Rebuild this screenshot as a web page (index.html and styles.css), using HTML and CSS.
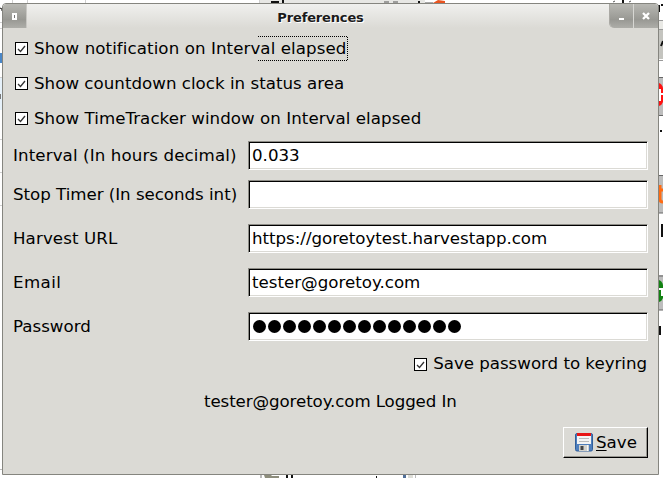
FILE: index.html
```html
<!DOCTYPE html>
<html lang="en">
<head>
<meta charset="utf-8">
<title>Preferences</title>
<link rel="stylesheet" href="styles.css">
</head>
<body>
<svg class="desktop" width="663" height="478" viewBox="0 0 663 478" aria-hidden="true">
  <rect width="663" height="478" fill="#fff"/>
  <path d="M12.500 0v4M27.500 0v4M85.500 0v4M259.500 0v4M0 22.500h3M0 28.500h3M0 77.500h3M0 139.500h3M0 172.500h3M0 205.500h3" stroke="#d0d0d0"/>
  <path d="M0 8l2 1v2" stroke="#111" fill="none"/>
  <path d="M0 53h3v10H0z" fill="#4a87c8"/>
  <path d="M0 78h3v32H0z" fill="#e6f1fa"/>
  <path d="M0 94h1v5H0z" fill="#777"/>
  <path d="M0 469.500h3" stroke="#bbb"/>
  <path d="M260 0h165v3H260z" fill="#e7e7e4"/>
  <path d="M271 1h8v2h-8zM282 0h2v3h-2zM418 1h2v3h-2zM622 0h2v3h-2z" fill="#111"/>
  <path d="M384 2h5M393 2h5M613 2l2-1M629 2l2-1" stroke="#555"/>
  <path d="M433 3l5-3 7 1v2z" fill="#e95420"/>
  <path d="M425 2.500h8" stroke="#aaa"/>
  <path d="M659 20h4v10h-4z" fill="#e9e9e5"/><path d="M659 30h4v29h-4z" fill="#c4c4bf"/>
  <path d="M659 20.500h4M659 29.500h4M659 60.500h4" stroke="#999"/>
  <path d="M659 5v7M661 5h2M661 46l2-5M660 131h2" stroke="#111" stroke-width="2" fill="none"/>
  <g id="badges">
    <path d="M659 77h4v38h-4zM659 175h4v38h-4zM659 275h4v35h-4z" fill="#bdbdbd"/>
    <path d="M659 77.500h4M659 115.500h4M659 175.500h4M659 213h4M659 276h4M659 310h4" stroke="#666"/>
    <path d="M659 83q3 1 4 5v14q-1 3-4 4z" fill="#f11"/>
    <path d="M660 89v12M660 94h3" stroke="#fff" stroke-width="2"/>
    <path d="M660 185v14q0 3 3 3M659 190h4" stroke="#ff6c13" stroke-width="3" fill="none"/>
    <path d="M659 280q3 1 4 5v13q-1 3-4 4z" fill="#128212"/>
    <path d="M659 289h4M662 288v8" stroke="#fff" stroke-width="2"/>
  </g>
  <path d="M661 224h2v13h-2zM659 326h2v9h-2z" fill="#111"/>
  <path d="M260 475h2v3h-2zM415 475h1v3h-1z" fill="#bbb"/>
  <path d="M264 475h7l1 1h7v2h-14z" fill="#8d8d7c"/>
  <path d="M286 475h2v3h-2zM291 475h2v3h-2zM376 476h1v2h-1z" fill="#111"/>
  <path d="M403 475h3v3h-3z" fill="#527099"/><path d="M408 475h5v3h-5z" fill="#deded8"/>
</svg>

<main class="window">
  <header class="titlebar">
    <span class="control menu"><svg width="24" height="24"><path d="M9 9h5v7H9z" fill="#fff"/><path d="M11 11h1v3h-1z" fill="#777"/></svg></span>
    <h1 class="title">Preferences</h1>
    <span class="controls">
      <span class="control minimize"><svg width="24" height="24"><path d="M9 14h5v2H9z" fill="#fff"/></svg></span>
      <span class="control close"><svg width="24" height="24"><path d="M9 9l6 6M15 9l-6 6" stroke="#fff" stroke-width="2.300"/></svg></span>
    </span>
  </header>

  <section class="checks">
    <div class="check"><svg class="box" width="13" height="13"><rect x=".5" y=".5" width="12" height="12"/><path d="M3 7l2.500 2.500L10 4"/></svg><span class="notify">Show notification on Interval elapsed</span></div>
    <div class="check"><svg class="box" width="13" height="13"><rect x=".5" y=".5" width="12" height="12"/><path d="M3 7l2.500 2.500L10 4"/></svg><span class="countdown">Show countdown clock in status area</span></div>
    <div class="check"><svg class="box" width="13" height="13"><rect x=".5" y=".5" width="12" height="12"/><path d="M3 7l2.500 2.500L10 4"/></svg><span class="tracker">Show TimeTracker window on Interval elapsed</span></div>
    <svg class="focus" width="92" height="26"><path d="M1 .5H91M90.500 1V25M1 24.500H91"/></svg>
  </section>

  <section class="fields">
    <span class="label interval">Interval (In hours decimal)</span><div class="entry">0.033</div>
    <span class="label stop">Stop Timer (In seconds int)</span><div class="entry"></div>
    <span class="label harvest">Harvest URL</span><div class="entry url">https://goretoytest.harvestapp.com</div>
    <span class="label email">Email</span><div class="entry">tester@goretoy.com</div>
    <span class="label">Password</span><div class="entry password"><i></i><i></i><i></i><i></i><i></i><i></i><i></i><i></i><i></i><i></i><i></i><i></i><i></i><i></i></div>
  </section>

  <div class="check keyring"><svg class="box" width="13" height="13"><rect x=".5" y=".5" width="12" height="12"/><path d="M3 7l2.500 2.500L10 4"/></svg><span>Save password to keyring</span></div>
  <p class="status">tester@goretoy.com Logged In</p>
  <div class="save">
    <svg width="18" height="19" viewBox="0 0 18 19"><rect x=".5" y=".5" width="17" height="17.500" rx="1.500" fill="#4f7fbd" stroke="#315f9b"/><path d="M2 1h14v10H2z" fill="#f4f4f4"/><path d="M2 0h14v3H2z" fill="#e81414"/><path d="M4 5.500h10M4 8.500h10" stroke="#bbb"/><path d="M4 12h10v6H4z" fill="#d2d2cd"/><path d="M5.500 13h3v4h-3z" fill="#444"/><path d="M12 12h1v6h-1z" fill="#f7f7f7"/></svg>
    <span><u>S</u>ave</span>
  </div>
</main>
</body>
</html>
```
FILE: styles.css
```css
* { box-sizing: border-box; }
body {
  margin: 0;
  width: 663px;
  height: 478px;
  overflow: hidden;
  padding: 3px 0 0 2px;
  font: 16.670px/20px "DejaVu Sans", sans-serif;
  color: #000;
}
svg { display: block; flex: none; }
.desktop { position: absolute; left: 0; top: 0; }
.window {
  position: relative;
  width: 657px;
  height: 472px;
  background: #dbdad5;
  border: 1px solid #85857f;
  border-radius: 4px 4px 0 0;
  overflow: hidden;
  white-space: nowrap;
}
.titlebar {
  display: flex;
  justify-content: space-between;
  height: 24px;
  background: linear-gradient(#f0f0ee, #dbdad5);
}
.title {
  margin: 0;
  padding: 4px 0 0 5px;
  font-size: 13px;
  line-height: 20px;
  letter-spacing: -.15px;
  color: #1a1a1a;
  text-shadow: 1px 1px #fff;
}
.controls { display: flex; border-left: 1px solid #aaa9a4; border-radius: 0 0 0 5px; overflow: hidden; }
.control { width: 24px; height: 24px; background: linear-gradient(#b8b8b3, #989893 65%, #adada8); }
.menu { border-right: 1px solid #c8c7c3; }
.minimize { border-right: 1px solid #d7d7d3; }
.checks { position: relative; padding: 3px 0 0 12px; }
.check { display: flex; align-items: center; gap: 6px; height: 35px; }
.notify { letter-spacing: .08px; }
.countdown { letter-spacing: .02px; }
.tracker { letter-spacing: .05px; }
.box { fill: #fff; stroke: #000; }
.box path { fill: none; stroke: #333; stroke-width: 1.300; }
.focus { position: absolute; left: 254px; top: 8px; fill: none; stroke: #000; stroke-dasharray: 1 1; }
.fields {
  display: grid;
  grid-template-columns: 235px 400px;
  grid-template-rows: 29px 39px 44px 44px 44px;
  align-items: end;
  padding: 5px 0 0 10px;
}
.label { line-height: 29px; }
.interval { letter-spacing: .11px; }
.stop { letter-spacing: -.03px; }
.harvest { letter-spacing: .1px; }
.email { letter-spacing: .4px; }
.url { letter-spacing: -.03px; }
.entry {
  height: 29px;
  padding: 4px 3px 0;
  background: #fff;
  border: 1px solid;
  border-color: #8d8c86 #fff #fff #8d8c86;
  box-shadow: inset 1px 1px #000, inset -1px -1px #dbdad5;
}
.password { display: flex; gap: 2px; padding: 7px 4px 0; }
.password i { width: 13px; height: 13px; border-radius: 50%; background: #000; }
.keyring { justify-content: flex-end; height: 20px; margin: 13px 11px 0 0; letter-spacing: -.02px; }
.status { margin: 18px 0 0 201px; letter-spacing: -.1px; }
.save {
  display: flex;
  align-items: center;
  gap: 3px;
  width: 85px;
  height: 31px;
  margin: 15px 0 0 560px;
  padding-left: 11px;
  border: 1px solid;
  border-color: #fff #000 #000 #fff;
  box-shadow: inset -1px -1px #96958f;
}
.save u { text-underline-offset: 2px; text-decoration-thickness: 1px; }
```
